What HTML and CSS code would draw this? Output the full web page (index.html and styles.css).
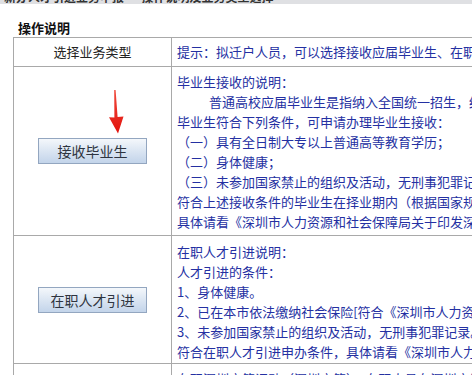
FILE: index.html
```html
<!DOCTYPE html>
<html lang="zh-CN">
<head>
<meta charset="utf-8">
<title>操作说明</title>
<link rel="stylesheet" href="styles.css">
</head>
<body>
<div class="topstrip"><div class="topstrip-text">新办人才引进业务申报 — 操作说明及业务类型选择</div></div>
<h3 class="title">操作说明</h3>
<table class="guide">
  <colgroup><col class="c1"><col class="c2"></colgroup>
  <tr class="head">
    <td class="left">选择业务类型</td>
    <td class="right">提示：拟迁户人员，可以选择接收应届毕业生、在职人才引进、在职深圳户籍调动等业务类型</td>
  </tr>
  <tr class="r2">
    <td class="left btncell">
      <svg class="arrow" width="20" height="48" viewBox="104 87 20 48" aria-hidden="true">
        <defs>
          <linearGradient id="ag" x1="0" y1="0" x2="0" y2="1">
            <stop offset="0" stop-color="#f04a3c"/>
            <stop offset="1" stop-color="#e2120c"/>
          </linearGradient>
        </defs>
        <polygon points="113.2,89 114.6,89 116.6,116 122.5,115.5 117,132.5 108,116.3 113.4,116.5" fill="url(#ag)"/>
      </svg>
      <span class="btn">接收毕业生</span>
    </td>
    <td class="right">
      <div class="ln">毕业生接收的说明：</div>
      <div class="ln ind">普通高校应届毕业生是指纳入全国统一招生，经教育部批准的普通高校毕业生</div>
      <div class="ln">毕业生符合下列条件，可申请办理毕业生接收：</div>
      <div class="ln">（一）具有全日制大专以上普通高等教育学历；</div>
      <div class="ln">（二）身体健康；</div>
      <div class="ln">（三）未参加国家禁止的组织及活动，无刑事犯罪记录。</div>
      <div class="ln">符合上述接收条件的毕业生在择业期内（根据国家规定为两年）</div>
      <div class="ln">具体请看《深圳市人力资源和社会保障局关于印发深圳市</div>
    </td>
  </tr>
  <tr class="r3">
    <td class="left btncell"><span class="btn">在职人才引进</span></td>
    <td class="right">
      <div class="ln">在职人才引进说明：</div>
      <div class="ln">人才引进的条件：</div>
      <div class="ln">1、身体健康。</div>
      <div class="ln">2、已在本市依法缴纳社会保险[符合《深圳市人力资源</div>
      <div class="ln">3、未参加国家禁止的组织及活动，无刑事犯罪记录。</div>
      <div class="ln">符合在职人才引进申办条件，具体请看《深圳市人力资源</div>
    </td>
  </tr>
  <tr class="r4">
    <td class="left"></td>
    <td class="right"><div class="ln">在职深圳户籍调动（深圳户籍）：在职人员在深圳户籍之间</div></td>
  </tr>
</table>
</body>
</html>
```
FILE: styles.css
```css
html, body {
  margin: 0;
  padding: 0;
  overflow: hidden;
  background: #ffffff;
}
body {
  font-family: "Noto Sans CJK SC", "Noto Sans", sans-serif;
  font-size: 13px;
  color: #222;
}
.topstrip {
  height: 4px;
  background: #dfe0e3;
  overflow: hidden;
}
.topstrip-text {
  margin-top: -10px;
  padding-left: 4px;
  line-height: 13px;
  font-size: 12px;
  font-weight: bold;
  color: #333;
  white-space: nowrap;
}
.title {
  margin: 0;
  padding: 14px 0 0 18px;
  height: 19px;
  line-height: 19px;
  font-size: 13px;
  font-weight: bold;
  color: #111;
}
.guide {
  margin-left: 13px;
  border-collapse: collapse;
  table-layout: fixed;
  width: 700px;
}
.guide col.c1 { width: 158px; }
.guide td {
  border: 1px solid #a9a9a9;
  padding: 0;
  line-height: 20px;
}
.guide td.left {
  text-align: center;
  vertical-align: middle;
  color: #222;
}
.guide td.right {
  padding-left: 5px;
  color: #2430a2;
  white-space: nowrap;
  overflow: hidden;
  vertical-align: top;
}
.head td.left, .head td.right { padding-top: 4px; padding-bottom: 4px; vertical-align: middle; }
.r2 td.right { padding-top: 5px; padding-bottom: 3px; }
.r3 td.right { padding-top: 6px; padding-bottom: 1px; }
.r4 td.right { padding-top: 5px; }
.ln.ind { padding-left: 32px; }
.btncell { position: relative; }
.arrow {
  position: absolute;
  left: 91px;
  top: 21px;
}
.btn {
  display: inline-block;
  box-sizing: border-box;
  width: 109px;
  height: 26px;
  line-height: 24px;
  border: 1px solid #93a6c0;
  background: linear-gradient(#f4f7fb 0%, #dde7f3 45%, #c3d4ea 100%);
  font-size: 14px;
  color: #2e3440;
  text-align: center;
  vertical-align: middle;
}
```
